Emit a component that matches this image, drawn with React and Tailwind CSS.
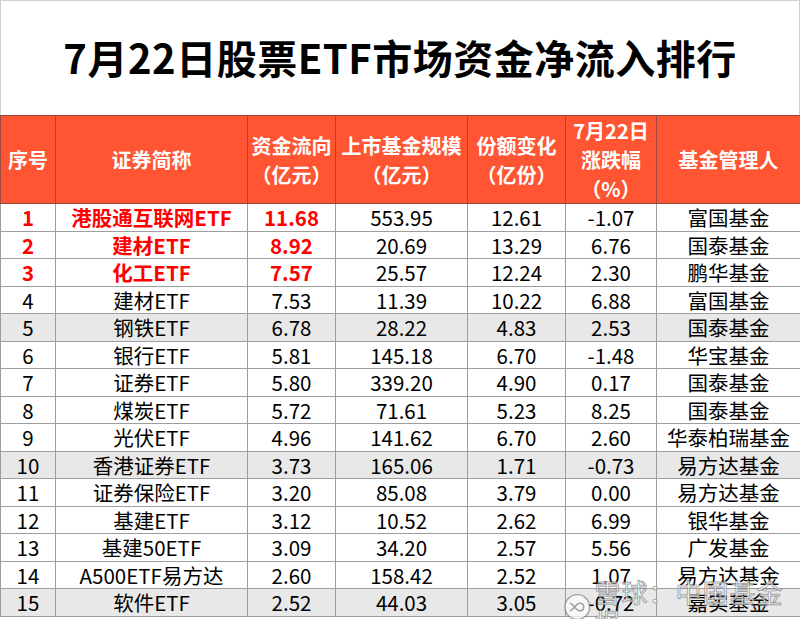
import React from 'react';

const rows = [
  ['1', '港股通互联网ETF', '11.68', '553.95', '12.61', '-1.07', '富国基金'],
  ['2', '建材ETF', '8.92', '20.69', '13.29', '6.76', '国泰基金'],
  ['3', '化工ETF', '7.57', '25.57', '12.24', '2.30', '鹏华基金'],
  ['4', '建材ETF', '7.53', '11.39', '10.22', '6.88', '富国基金'],
  ['5', '钢铁ETF', '6.78', '28.22', '4.83', '2.53', '国泰基金'],
  ['6', '银行ETF', '5.81', '145.18', '6.70', '-1.48', '华宝基金'],
  ['7', '证券ETF', '5.80', '339.20', '4.90', '0.17', '国泰基金'],
  ['8', '煤炭ETF', '5.72', '71.61', '5.23', '8.25', '国泰基金'],
  ['9', '光伏ETF', '4.96', '141.62', '6.70', '2.60', '华泰柏瑞基金'],
  ['10', '香港证券ETF', '3.73', '165.06', '1.71', '-0.73', '易方达基金'],
  ['11', '证券保险ETF', '3.20', '85.08', '3.79', '0.00', '易方达基金'],
  ['12', '基建ETF', '3.12', '10.52', '2.62', '6.99', '银华基金'],
  ['13', '基建50ETF', '3.09', '34.20', '2.57', '5.56', '广发基金'],
  ['14', 'A500ETF易方达', '2.60', '158.42', '2.52', '1.07', '易方达基金'],
  ['15', '软件ETF', '2.52', '44.03', '3.05', '-0.72', '嘉实基金'],
];

const widths = ['w-[55px]', 'w-[192px]', 'w-[88px]', 'w-[132px]', 'w-[98px]', 'w-[91px]', 'w-[144px]'];

const headers = [
  ['序号'],
  ['证券简称'],
  ['资金流向', '（亿元）'],
  ['上市基金规模', '（亿元）'],
  ['份额变化', '（亿份）'],
  ['7月22日', '涨跌幅', '（%）'],
  ['基金管理人'],
];

// snowball watermark over the bottom right corner
function Watermark() {
  return (
    <div className="absolute left-[563px] top-[577px] flex items-center gap-[3px] pointer-events-none">
      <svg width="30" height="30" viewBox="0 0 30 30">
        <circle cx="15" cy="15" r="13" fill="rgba(255,255,255,0.7)" stroke="rgba(110,110,110,0.6)" strokeWidth="1.5" />
        <path d="M7 11 C11 11 13 19 18 19 M7 19 C11 19 13 11 18 11 M18 11 C23 11 23 19 18 19" fill="none" stroke="rgba(110,110,110,0.65)" strokeWidth="1.6" />
      </svg>
      <span className="text-[26px] leading-[30px] text-white/75 [-webkit-text-stroke:0.9px_rgba(100,100,100,0.6)] tracking-[1px]">
        雪球：中国基金报
      </span>
    </div>
  );
}

export default function App() {
  return (
    <div className="relative w-[800px] h-[619px] bg-white overflow-hidden font-['Noto_Sans_CJK_SC','Noto_Sans',sans-serif]">
      <div className="h-[115px] flex items-center justify-center border-l border-t border-r border-[#d0d0d0]">
        <h1 className="text-[40px] font-bold text-black leading-none tracking-[0.5px] pb-[2px]">
          7月22日股票ETF市场资金净流入排行
        </h1>
      </div>
      <table className="table-fixed border-collapse w-[800px]">
        <thead>
          <tr className="h-[88px] bg-[#ff5533]">
            {headers.map((lines, i) => (
              <th
                key={i}
                className={`${widths[i]} border border-[#9a4a3a] text-white font-bold text-[20px] leading-[29px] text-center align-middle p-0 whitespace-nowrap`}
              >
                {lines.map((l, j) => (
                  <div key={j}>{l}</div>
                ))}
              </th>
            ))}
          </tr>
        </thead>
        <tbody>
          {rows.map((r, i) => {
            const top = i < 3;
            const shaded = i === 4 || i === 9 || i === 14;
            return (
              <tr key={i} className={`h-[27.5px] ${shaded ? 'bg-[#e8e8e8]' : 'bg-white'}`}>
                {r.map((c, j) => (
                  <td
                    key={j}
                    className={`border border-[#9e9e9e] text-center p-0 text-[20.5px] leading-[26px] whitespace-nowrap ${
                      top && j < 3 ? 'text-[#ff0000] font-bold' : 'text-black'
                    }`}
                  >
                    {c}
                  </td>
                ))}
              </tr>
            );
          })}
        </tbody>
      </table>
      <Watermark />
    </div>
  );
}
